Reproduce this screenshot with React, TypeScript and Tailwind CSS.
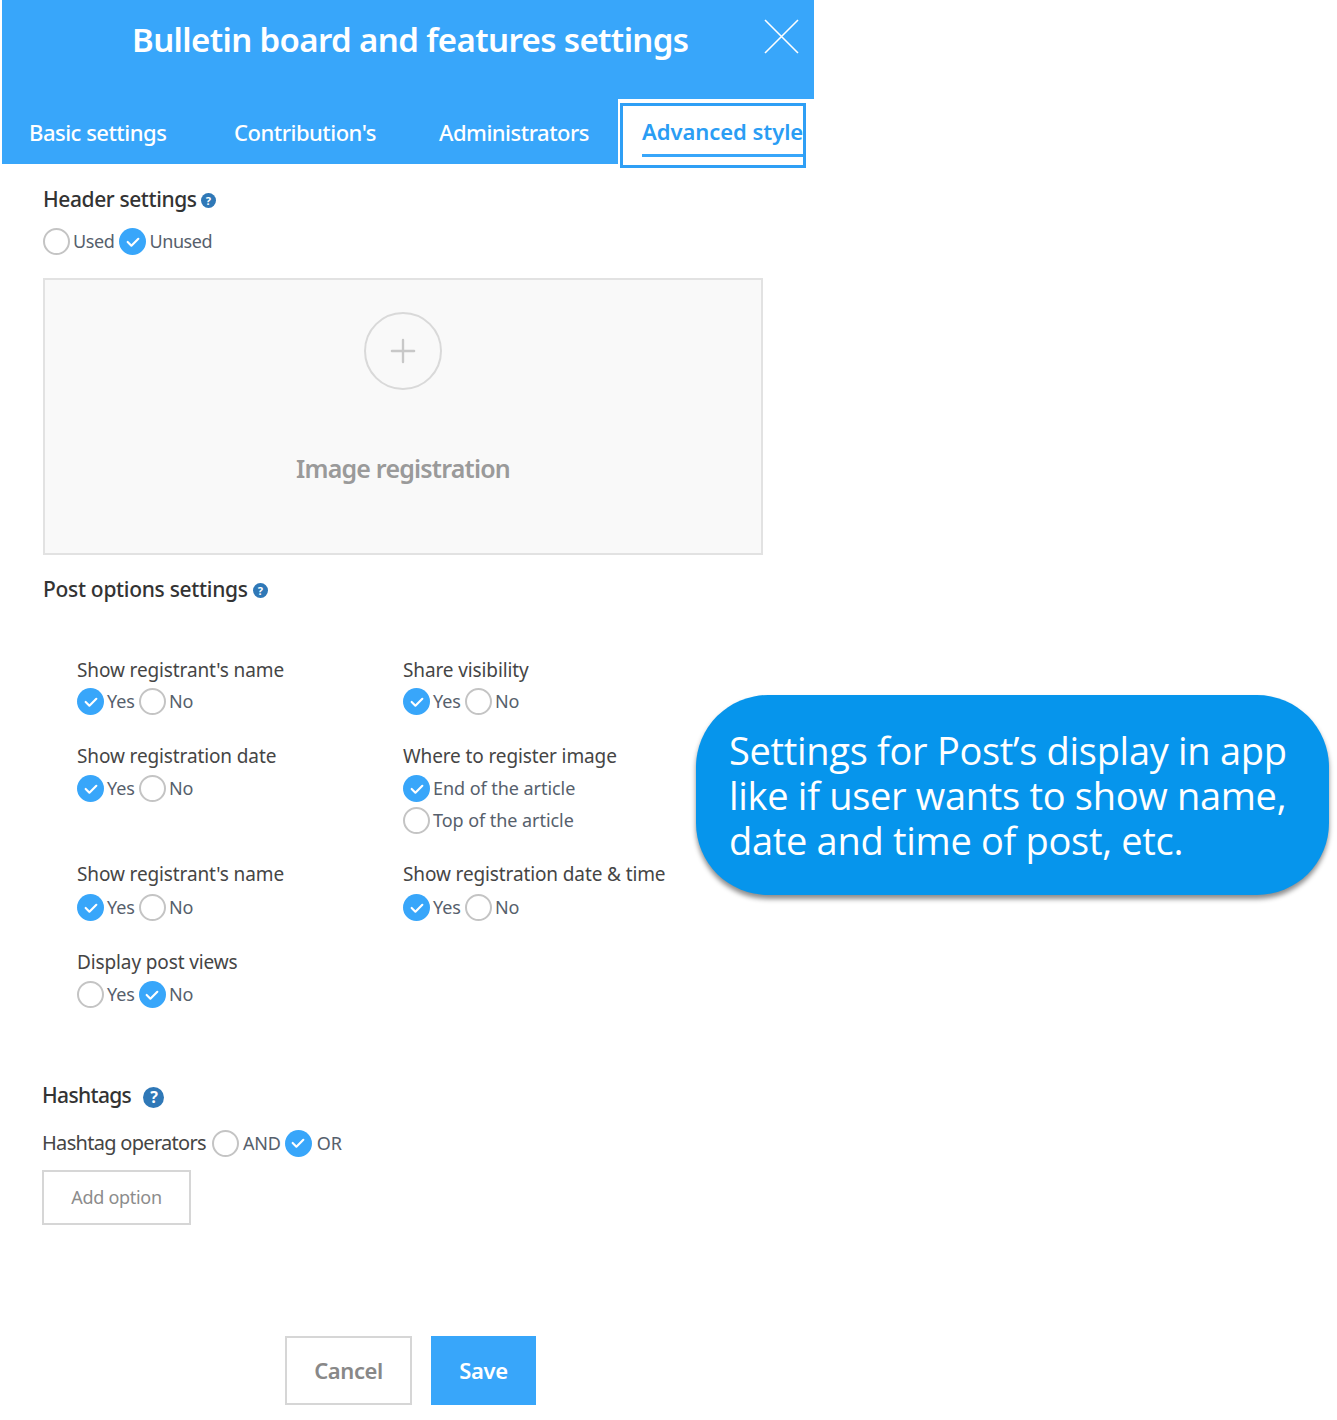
import { Plus } from 'lucide-react'

const font = 'font-["Noto_Sans",sans-serif]'

function Help({ size = 'w-[15px] h-[15px] text-[11px]' }: { size?: string }) {
  return (
    <span className={`${size} inline-flex items-center justify-center rounded-full bg-[#2f78b7] text-white font-bold leading-none`}>?</span>
  )
}

function Radio({ on, label, labelClass = 'ml-[3px] tracking-[-0.05px]' }: { on?: boolean; label: string; labelClass?: string }) {
  return (
    <span className="flex items-center">
      {on ? (
        <span className="w-[27px] h-[27px] rounded-full bg-[#38a6fa] flex items-center justify-center">
          <svg width="16" height="16" viewBox="0 0 15 15" fill="none" stroke="white" strokeWidth="2" strokeLinecap="round" strokeLinejoin="round">
            <path d="M2.5 7.5 6 11l6.5-6.5" />
          </svg>
        </span>
      ) : (
        <span className="w-[27px] h-[27px] rounded-full border-2 border-[#c4c4c4] bg-white" />
      )}
      <span className={`${labelClass} text-[18px] leading-[27px] text-[#56606c]`}>{label}</span>
    </span>
  )
}

function Option({ title, className = '', children }: { title: string; className?: string; children: React.ReactNode }) {
  return (
    <div className={className}>
      <div className="text-[19px] leading-[26px] tracking-[-0.12px] text-[#454545]">{title}</div>
      {children}
    </div>
  )
}

function YesNo({ yes, className = 'mt-[6px]' }: { yes: boolean; className?: string }) {
  return (
    <div className={`flex gap-[4px] ${className}`}>
      <Radio on={yes} label="Yes" />
      <Radio on={!yes} label="No" />
    </div>
  )
}

export default function App() {
  return (
    <div className={`${font} relative w-[1337px] h-[1420px] bg-white overflow-hidden`}>
      <div className="ml-[2px] w-[812px]">
        {/* Header */}
        <div className="h-[99px] bg-[#38a6fa] flex items-start text-white">
          <h1 className="ml-[130px] mt-[17px] text-[33px] leading-[46px] font-semibold tracking-[-0.62px] whitespace-nowrap">
            Bulletin board and features settings
          </h1>
          <svg className="ml-auto mr-[15px] mt-[19px]" width="35" height="35" viewBox="0 0 35 35" fill="none" stroke="white" strokeWidth="1.6">
            <path d="M1 1 34 34M34 1 1 34" />
          </svg>
        </div>

        {/* Tabs */}
        <div className="flex h-[65px]">
          <div className="w-[616px] bg-[#38a6fa] flex items-center pt-[2px] text-white text-[22px] font-medium tracking-[-0.5px]">
            <span className="ml-[27px] w-[205px]">Basic settings</span>
            <span className="w-[205px]">Contribution's</span>
            <span>Administrators</span>
          </div>
          <div className="relative z-10 w-[190px] h-[72px] bg-white p-[2px] pt-[4px] text-[22px] font-semibold tracking-[-0.05px]">
            <div className="h-[65px] border-[3px] border-[#2f9ff5] pl-[19px] text-[#2a9df4] whitespace-nowrap overflow-hidden">
              <div className="h-[51px] leading-[50px] border-b-[3px] border-[#38a6fa]">Advanced style</div>
            </div>
          </div>
        </div>

        {/* Header settings */}
        <div className="pl-[41px]">
          <div className="mt-[22px] flex items-center gap-[4px] h-[28px] text-[21px] font-medium tracking-[-0.4px] text-[#333]">
            Header settings <Help />
          </div>
          <div className="mt-[14px] flex gap-[5px]">
            <Radio label="Used" labelClass="ml-[3px] tracking-[-0.4px]" />
            <Radio on label="Unused" labelClass="ml-[3px] tracking-[-0.4px]" />
          </div>

          <div className="mt-[23px] w-[720px] h-[277px] border-2 border-[#e2e2e2] bg-[#f9f9f9] flex flex-col items-center">
            <div className="mt-[32px] w-[78px] h-[78px] rounded-full border-2 border-[#d9d9d9] flex items-center justify-center text-[#c8c8c8]">
              <Plus className="w-[38px] h-[38px]" strokeWidth={1.5} />
            </div>
            <div className="mt-[61px] text-[25px] leading-[34px] font-semibold tracking-[-0.8px] text-[#9a9a9a]">Image registration</div>
          </div>

          {/* Post options */}
          <div className="mt-[21px] flex items-center gap-[5px] h-[28px] text-[21px] font-medium tracking-[-0.3px] text-[#333]">
            Post options settings <Help />
          </div>

          <div className="mt-[53px] ml-[34px] grid grid-cols-[326px_1fr]">
            <Option title="Show registrant's name"><YesNo yes className="mt-[5px]" /></Option>
            <Option title="Share visibility"><YesNo yes className="mt-[5px]" /></Option>

            <Option title="Show registration date" className="mt-[28px]"><YesNo yes /></Option>
            <Option title="Where to register image" className="mt-[28px]">
              <div className="mt-[6px] flex flex-col gap-[5px]">
                <Radio on label="End of the article" />
                <Radio label="Top of the article" />
              </div>
            </Option>

            <Option title="Show registrant's name" className="mt-[27px]"><YesNo yes className="mt-[7px]" /></Option>
            <Option title="Show registration date & time" className="mt-[27px]"><YesNo yes className="mt-[7px]" /></Option>

            <Option title="Display post views" className="mt-[28px]"><YesNo yes={false} /></Option>
          </div>

          {/* Hashtags */}
          <div className="mt-[73px] flex items-center h-[30px] text-[21px] font-medium tracking-[-0.65px] text-[#333] -ml-[1px]">
            Hashtags
            <span className="ml-[12px]"><Help size="w-[21px] h-[21px] text-[16px]" /></span>
          </div>
          <div className="mt-[17px] flex items-center -ml-[1px]">
            <span className="text-[20px] tracking-[-0.7px] text-[#454545] mr-[6px]">Hashtag operators</span>
            <div className="flex gap-[4px]">
              <Radio label="AND" labelClass="ml-[4px] tracking-[-0.15px]" />
              <Radio on label="OR" labelClass="ml-[5px] tracking-[-0.15px]" />
            </div>
          </div>
          <button className="mt-[12px] -ml-[1px] block w-[149px] h-[55px] border-2 border-[#d6d6d6] text-[18px] tracking-[-0.3px] text-[#8c8c8c]">
            Add option
          </button>

          {/* Footer buttons */}
          <div className="mt-[111px] ml-[242px] flex gap-[19px]">
            <button className="w-[127px] h-[69px] border-2 border-[#d6d6d6] text-[22px] font-semibold tracking-[-0.4px] text-[#888]">Cancel</button>
            <button className="w-[105px] h-[69px] bg-[#38a6fa] text-[22px] font-semibold tracking-[-0.4px] text-white">Save</button>
          </div>
        </div>
      </div>

      {/* Annotation bubble */}
      <div className='absolute left-[696px] top-[695px] w-[633px] h-[200px] rounded-[72px] bg-[#0695ec] shadow-[0_4px_5px_rgba(0,0,0,0.45)] pl-[33px] pt-[33px] font-["Open_Sans",sans-serif] text-[38px] leading-[45px] tracking-[-0.3px] text-white whitespace-nowrap'>
        <div>Settings for Post’s display in app</div>
        <div>like if user wants to show name,</div>
        <div>date and time of post, etc.</div>
      </div>
    </div>
  )
}
